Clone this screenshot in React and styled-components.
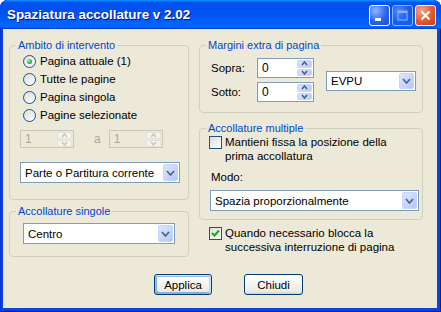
import React from "react";
import styled, { createGlobalStyle } from "styled-components";

const GlobalStyle = createGlobalStyle`
  html, body { margin: 0; padding: 0; background: #ffffff; }
  body { font-family: "Liberation Sans", Arial, sans-serif; font-size: 11.5px; color: #000; }
`;

const Window = styled.div`
  width: 441px;
  height: 312px;
  box-sizing: border-box;
  display: flex;
  flex-direction: column;
  border-radius: 8px 8px 0 0;
  overflow: hidden;
  background: #0846dc;
  box-shadow: inset 1px 0 #0831d9, inset -1px 0 #001ea0, inset 0 -1px #001ea0;
`;

const TitleBar = styled.div`
  height: 29px;
  flex: none;
  display: flex;
  align-items: center;
  padding: 0 5px 0 7px;
  background: linear-gradient(180deg, #0997ff, #0053ee 8%, #0050ee 40%, #0066ff 88%, #0066ff 93%, #005bff 95%, #003dd7 96%, #003dd7);
`;

const TitleText = styled.div`
  flex: 1;
  color: #fff;
  font-family: "Liberation Sans", Arial, sans-serif;
  font-weight: bold;
  font-size: 13.4px;
  text-shadow: 1px 1px #0f1089;
`;

const TitleButtons = styled.div`
  display: flex;
  gap: 2px;
  margin-top: 2px;
`;

const CaptionButton = styled.div`
  width: 21px;
  height: 21px;
  box-sizing: border-box;
  border: 1px solid #fff;
  border-radius: 3px;
  display: flex;
  align-items: center;
  justify-content: center;
  background: ${p => p.$close
    ? "radial-gradient(circle at 30% 25%, #f2a58a, #e35a32 55%, #c43a12)"
    : "radial-gradient(circle at 30% 25%, #8fb8ff, #2a64ec 55%, #1c4fd6)"};
  opacity: ${p => (p.$disabled ? 0.55 : 1)};
`;

const Client = styled.div`
  flex: 1;
  margin: 0 4px 4px 3px;
  background: #ece9d8;
  padding: 10px 0 0 6px;
  display: flex;
  flex-direction: column;
`;

const Columns = styled.div`
  display: grid;
  grid-template-columns: 180px 224px;
  column-gap: 10px;
  align-items: start;
`;

const Column = styled.div`
  display: flex;
  flex-direction: column;
`;

const Group = styled.fieldset`
  margin: ${p => p.$mt || 0}px 0 0 0;
  padding: 0;
  min-width: 0;
  border: 1px solid #d0d0bf;
  border-radius: 4px;
`;

const Legend = styled.legend`
  margin-left: 6px;
  padding: 0 2px;
  color: #0046d5;
  font-size: 11px;
  line-height: 13px;
`;

const GroupBody = styled.div`
  display: flex;
  flex-direction: column;
  padding: ${p => p.$pad};
`;

const OptionList = styled.div`
  display: flex;
  flex-direction: column;
  padding-left: 3px;
`;

const OptionRow = styled.label`
  display: flex;
  align-items: ${p => (p.$top ? "flex-start" : "center")};
  gap: ${p => p.$gap || 4}px;
  min-height: 18px;
  line-height: 14px;
  margin-top: ${p => p.$mt || 0}px;
  padding-left: ${p => p.$pl || 0}px;
`;

const RadioCircle = styled.span`
  width: 13px;
  height: 13px;
  flex: none;
  box-sizing: border-box;
  border: 1px solid #1d5281;
  border-radius: 50%;
  background: linear-gradient(135deg, #dcdcd7, #ffffff);
  display: flex;
  align-items: center;
  justify-content: center;
  &::after {
    content: "";
    display: ${p => (p.$checked ? "block" : "none")};
    width: 5px;
    height: 5px;
    border-radius: 50%;
    background: radial-gradient(circle at 35% 35%, #a6f2a6, #2cb02c 60%, #1a8a1a);
  }
`;

const CheckBox = styled.span`
  width: 13px;
  height: 13px;
  flex: none;
  margin-top: 1px;
  box-sizing: border-box;
  border: 1px solid #1d5281;
  background: linear-gradient(135deg, #dcdcd7, #ffffff);
  display: flex;
  align-items: center;
  justify-content: center;
`;

const Row = styled.div`
  display: flex;
  align-items: center;
  margin-top: ${p => p.$mt || 0}px;
`;

const SpinField = styled.div`
  width: ${p => p.$w}px;
  height: ${p => p.$h}px;
  box-sizing: border-box;
  border: 1px solid ${p => (p.$disabled ? "#c9c7ba" : "#7f9db9")};
  background: ${p => (p.$disabled ? "#ece9d8" : "#ffffff")};
  display: flex;
  align-items: center;
  padding: 1px 1px 1px 4px;
  color: ${p => (p.$disabled ? "#aca899" : "#000")};
`;

const FieldValue = styled.span`
  flex: 1;
  font-size: 12px;
`;

const SpinButtons = styled.div`
  width: 15px;
  height: 100%;
  display: flex;
  flex-direction: column;
  gap: 1px;
`;

const SpinHalf = styled.div`
  flex: 1;
  border-radius: 2px;
  display: flex;
  align-items: center;
  justify-content: center;
  background: ${p => (p.$disabled ? "#f4f3ee" : "linear-gradient(135deg, #d8e3fd, #b6cbf7)")};
  border: 1px solid ${p => (p.$disabled ? "#e4e2d8" : "#c5d5fb")};
  box-sizing: border-box;
`;

const Combo = styled.div`
  width: ${p => p.$w}px;
  height: ${p => p.$h || 21}px;
  box-sizing: border-box;
  margin: ${p => p.$mt || 0}px 0 0 ${p => p.$ml || 0}px;
  border: 1px solid #7f9db9;
  background: #fff;
  display: flex;
  align-items: center;
  padding: 1px 1px 1px 4px;
`;

const ComboText = styled.span`
  flex: 1;
  font-size: 11.5px;
`;

const ComboArrow = styled.div`
  width: 15px;
  height: 100%;
  box-sizing: border-box;
  border: 1px solid #c5d5fb;
  border-radius: 2px;
  background: linear-gradient(135deg, #dde6fd, #b4c8f6);
  display: flex;
  align-items: center;
  justify-content: center;
`;

const DimLabel = styled.span`
  color: #aca899;
  font-size: 12px;
  margin: 0 8px 0 20px;
`;

const MarginGrid = styled.div`
  display: grid;
  grid-template-columns: 46px 57px;
  row-gap: 4px;
  align-items: center;
`;

const FieldLabel = styled.span`
  font-size: 11.5px;
  margin-top: ${p => p.$mt || 0}px;
  padding-left: ${p => p.$pl || 0}px;
  line-height: 14px;
`;

const Footer = styled.div`
  display: flex;
  gap: 32px;
  padding-left: 145px;
  margin-top: 17px;
`;

const Button = styled.button`
  width: ${p => p.$w}px;
  height: 21px;
  padding: 0;
  font-family: "Liberation Sans", Arial, sans-serif;
  font-size: 11.5px;
  color: #000;
  border: 1px solid #003c74;
  border-radius: 3px;
  background: linear-gradient(180deg, #ffffff, #ecebe5 86%, #d8d0c4);
  box-shadow: ${p => p.$default
    ? "inset -1px 1px #cee7ff, inset 1px 2px #98b8ea, inset -2px 2px #bcd4f6, inset 1px -1px #89ade4, inset 2px -2px #89ade4"
    : "none"};
`;

const Chevron = ({ dir = "down", color = "#4d6185", w = 7, h = 4 }) => (
  <svg width={w + 2} height={h + 2} viewBox={`0 0 ${w + 2} ${h + 2}`}>
    <path
      d={dir === "down" ? `M1 1 L${(w + 2) / 2} ${h + 1} L${w + 1} 1` : `M1 ${h + 1} L${(w + 2) / 2} 1 L${w + 1} ${h + 1}`}
      fill="none"
      stroke={color}
      strokeWidth="1.6"
    />
  </svg>
);

const Spin = ({ value, w, h, disabled }) => (
  <SpinField $w={w} $h={h} $disabled={disabled}>
    <FieldValue>{value}</FieldValue>
    <SpinButtons>
      <SpinHalf $disabled={disabled}>
        <Chevron dir="up" w={5} h={3} color={disabled ? "#c9c7ba" : "#4d6185"} />
      </SpinHalf>
      <SpinHalf $disabled={disabled}>
        <Chevron dir="down" w={5} h={3} color={disabled ? "#c9c7ba" : "#4d6185"} />
      </SpinHalf>
    </SpinButtons>
  </SpinField>
);

const Select = ({ text, w, h, mt, ml }) => (
  <Combo $w={w} $h={h} $mt={mt} $ml={ml}>
    <ComboText>{text}</ComboText>
    <ComboArrow>
      <Chevron />
    </ComboArrow>
  </Combo>
);

const radios = ["Pagina attuale (1)", "Tutte le pagine", "Pagina singola", "Pagine selezionate"];

export default function App() {
  return (
    <>
      <GlobalStyle />
      <Window>
        <TitleBar>
          <TitleText>Spaziatura accollature v 2.02</TitleText>
          <TitleButtons>
            <CaptionButton>
              <svg width="13" height="13" viewBox="0 0 13 13">
                <rect x="2" y="9" width="6" height="3" fill="#fff" />
              </svg>
            </CaptionButton>
            <CaptionButton $disabled>
              <svg width="13" height="13" viewBox="0 0 13 13">
                <rect x="2" y="2" width="9" height="9" fill="none" stroke="#fff" strokeWidth="1" />
                <rect x="2" y="2" width="9" height="2" fill="#fff" />
              </svg>
            </CaptionButton>
            <CaptionButton $close>
              <svg width="13" height="13" viewBox="0 0 13 13">
                <path d="M2.5 2.5 L10.5 10.5 M10.5 2.5 L2.5 10.5" stroke="#fff" strokeWidth="2" />
              </svg>
            </CaptionButton>
          </TitleButtons>
        </TitleBar>
        <Client>
          <Columns>
            <Column>
              <Group>
                <Legend>Ambito di intervento</Legend>
                <GroupBody $pad="0 10px 16px 10px">
                  <OptionList>
                    {radios.map((r, i) => (
                      <OptionRow key={r}>
                        <RadioCircle $checked={i === 0} />
                        <span>{r}</span>
                      </OptionRow>
                    ))}
                  </OptionList>
                  <Row $mt={6}>
                    <Spin value="1" w={54} h={18} disabled />
                    <DimLabel>a</DimLabel>
                    <Spin value="1" w={54} h={18} disabled />
                  </Row>
                  <Select text="Parte o Partitura corrente" w={160} mt={14} />
                </GroupBody>
              </Group>
              <Group $mt={5}>
                <Legend>Accollature singole</Legend>
                <GroupBody $pad="5px 0 12px 13px">
                  <Select text="Centro" w={152} />
                </GroupBody>
              </Group>
            </Column>
            <Column>
              <Group>
                <Legend>Margini extra di pagina</Legend>
                <GroupBody $pad="6px 0 10px 11px">
                  <Row>
                    <MarginGrid>
                      <FieldLabel>Sopra:</FieldLabel>
                      <Spin value="0" w={57} h={20} />
                      <FieldLabel>Sotto:</FieldLabel>
                      <Spin value="0" w={57} h={20} />
                    </MarginGrid>
                    <Select text="EVPU" w={90} h={20} mt={2} ml={12} />
                  </Row>
                </GroupBody>
              </Group>
              <Group $mt={9}>
                <Legend>Accollature multiple</Legend>
                <GroupBody $pad="0 4px 8px 9px">
                  <OptionRow $top $gap={3}>
                    <CheckBox />
                    <span>Mantieni fissa la posizione della<br />prima accollatura</span>
                  </OptionRow>
                  <FieldLabel $mt={7} $pl={2}>Modo:</FieldLabel>
                  <Select text="Spazia proporzionalmente" w={209} mt={6} ml={1} />
                </GroupBody>
              </Group>
              <OptionRow $top $gap={3} $mt={6} $pl={10}>
                <CheckBox>
                  <svg width="9" height="9" viewBox="0 0 9 9">
                    <path d="M1 4 L3.5 6.5 L8 1.5" fill="none" stroke="#21a121" strokeWidth="2" />
                  </svg>
                </CheckBox>
                <span>Quando necessario blocca la<br />successiva interruzione di pagina</span>
              </OptionRow>
            </Column>
          </Columns>
          <Footer>
            <Button $w={58} $default>Applica</Button>
            <Button $w={59}>Chiudi</Button>
          </Footer>
        </Client>
      </Window>
    </>
  );
}
